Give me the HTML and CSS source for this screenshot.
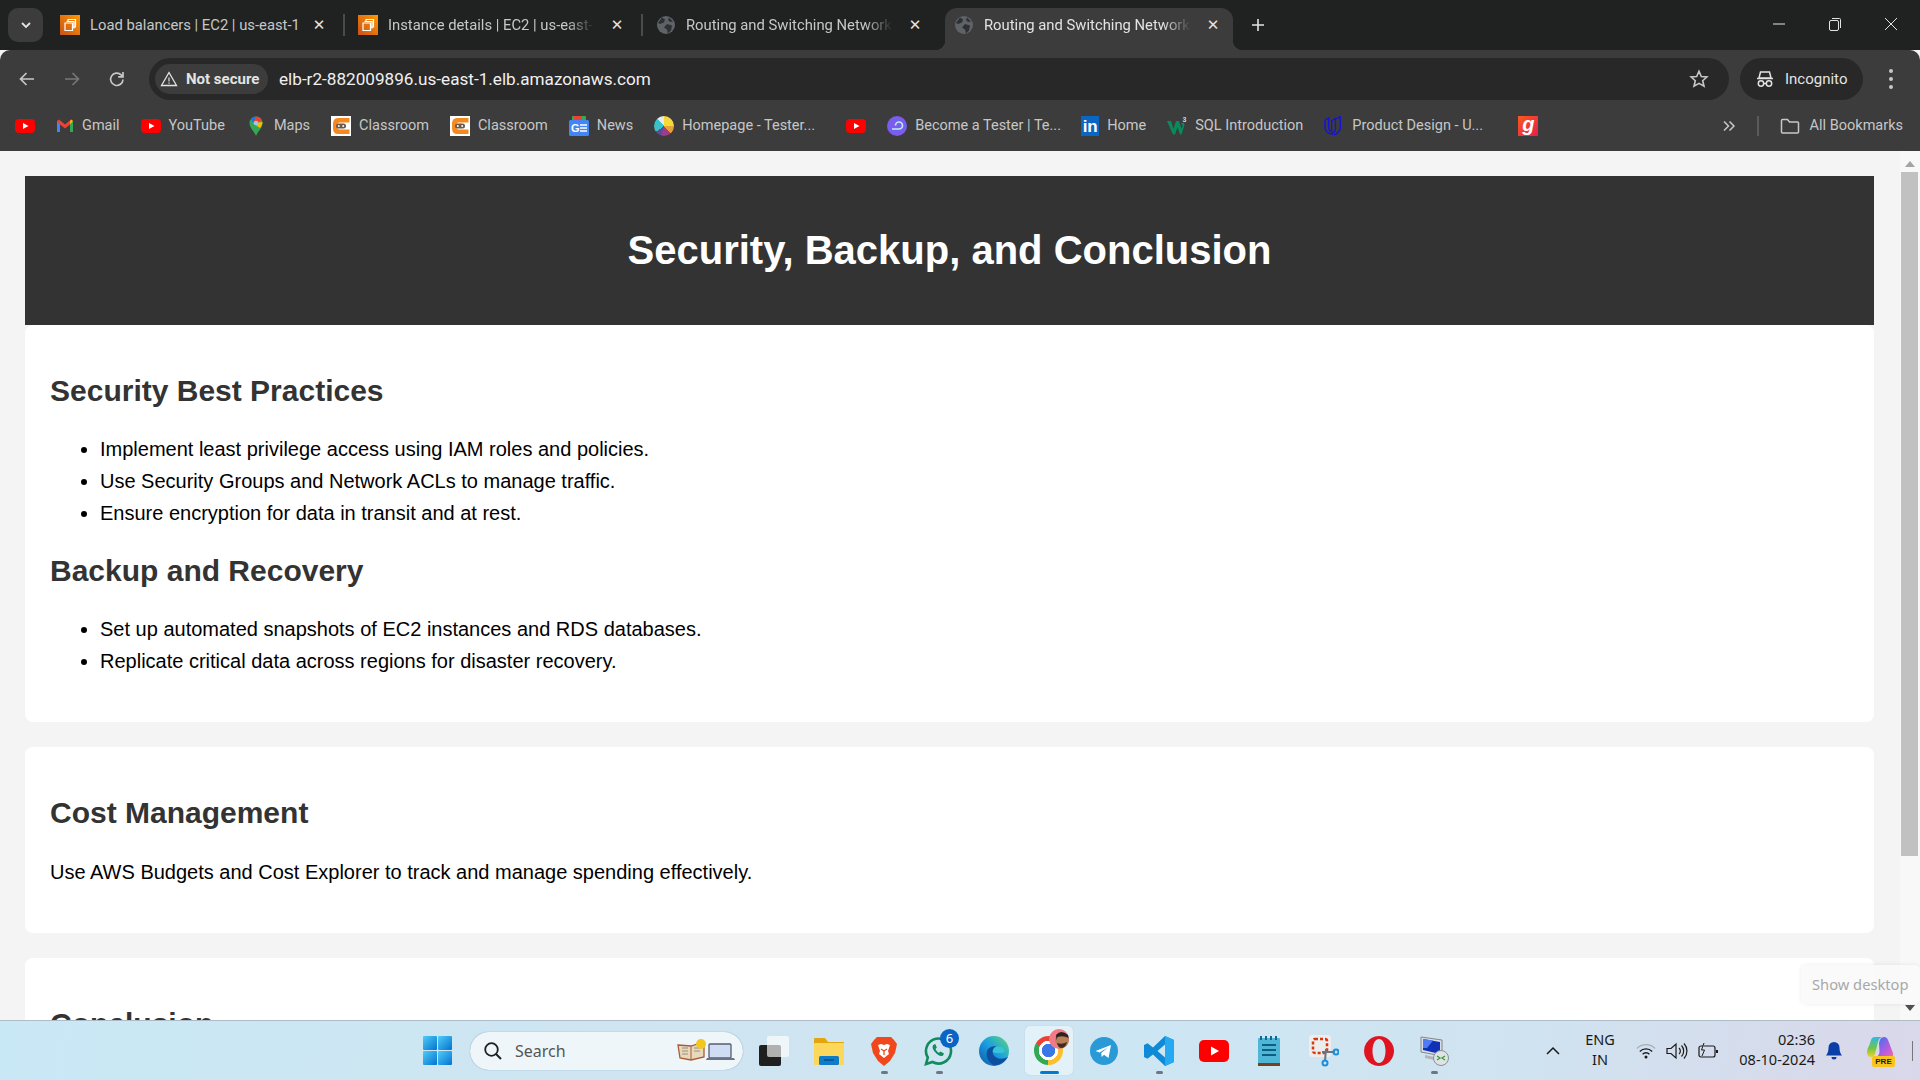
FILE: index.html
```html
<!DOCTYPE html>
<html lang="en">
<head>
  <meta charset="UTF-8" />
  <title>Routing and Switching Network</title>
  <link rel="stylesheet" href="styles.css">
</head>
<body>
  <svg class="defs" width="0" height="0">
    <defs>
      <linearGradient id="awsGrad" x1="0" y1="1" x2="1" y2="0"><stop offset="0" stop-color="#c8511b"/><stop offset="1" stop-color="#ff9900"/></linearGradient>
      <linearGradient id="winGrad" x1="0" y1="0" x2="1" y2="1"><stop offset="0" stop-color="#4fcdf8"/><stop offset="1" stop-color="#0472d0"/></linearGradient>
      <linearGradient id="edgeGrad" x1="0" y1="1" x2="1" y2="0"><stop offset="0" stop-color="#0c59a4"/><stop offset=".5" stop-color="#1b9de2"/><stop offset="1" stop-color="#5edb78"/></linearGradient>
      <linearGradient id="copLeft" x1="0" y1="0" x2="0" y2="1"><stop offset="0" stop-color="#2fb7ee"/><stop offset=".55" stop-color="#6cc644"/><stop offset="1" stop-color="#f2d02e"/></linearGradient>
      <linearGradient id="copRight" x1="0" y1="0" x2="1" y2="1"><stop offset="0" stop-color="#2a78e8"/><stop offset=".6" stop-color="#b45be0"/><stop offset="1" stop-color="#f06aa8"/></linearGradient>
      <symbol id="aws" viewBox="0 0 20 20">
        <rect width="20" height="20" fill="url(#awsGrad)"/>
        <path d="M8 7V4.500h7.500V12H13M5 8h7.500v7.500H5zM6.500 6.500h7.500v7" fill="none" stroke="#fff" stroke-width="1.200"/>
      </symbol>
      <symbol id="globe" viewBox="0 0 20 20">
        <circle cx="10" cy="10" r="9" fill="#5f6368"/>
        <path d="M6 2.500l3 2-1 3-4 1.500-2-1zM11 9l5 1.500-1 5-3 3-1-4-3-2zM13 2.500l4 4-3 .5-2-2z" fill="#2e3033"/>
      </symbol>
      <symbol id="yt" viewBox="0 0 20 20">
        <rect x="0" y="3" width="20" height="14" rx="4" fill="#f00"/>
        <path d="M8 7l5.500 3L8 13z" fill="#fff"/>
      </symbol>
      <symbol id="ninja" viewBox="0 0 20 20">
        <rect width="20" height="20" fill="#fff"/>
        <path d="M18.500 2H7Q2 2 2 8v4q0 6 5 6h11.500v-4.500H8.500q-2 0-2-2v-3q0-2 2-2h10z" fill="#f48a1f"/>
        <rect x="5" y="7.500" width="10" height="5" rx="2.500" fill="#6b5a4a"/>
        <circle cx="7.800" cy="10" r="1" fill="#fff"/><circle cx="12.200" cy="10" r="1" fill="#fff"/>
      </symbol>
    </defs>
  </svg>

  <div class="tabstrip">
    <button class="tab-search"><svg width="14" height="14" viewBox="0 0 14 14"><path d="M3 5l4 4 4-4" fill="none" stroke="#e3e3e3" stroke-width="1.800"/></svg></button>
    <div class="tab">
      <svg class="favicon"><use href="#aws"/></svg>
      <span class="tab-title">Load balancers | EC2 | us-east-1</span>
      <span class="tab-close">✕</span>
    </div>
    <span class="tab-sep"></span>
    <div class="tab">
      <svg class="favicon"><use href="#aws"/></svg>
      <span class="tab-title fade">Instance details | EC2 | us-east-1</span>
      <span class="tab-close">✕</span>
    </div>
    <span class="tab-sep"></span>
    <div class="tab">
      <svg class="favicon"><use href="#globe"/></svg>
      <span class="tab-title fade">Routing and Switching Network</span>
      <span class="tab-close">✕</span>
    </div>
    <span class="tab-sep hidden"></span>
    <div class="tab active">
      <svg class="favicon"><use href="#globe"/></svg>
      <span class="tab-title fade">Routing and Switching Network</span>
      <span class="tab-close">✕</span>
    </div>
    <svg class="new-tab" width="16" height="16" viewBox="0 0 16 16"><path d="M8 2v12M2 8h12" stroke="#e3e3e3" stroke-width="1.600"/></svg>
    <div class="win-controls">
      <svg width="14" height="14" viewBox="0 0 14 14"><path d="M1 7h12" stroke="#e3e3e3"/></svg>
      <svg width="14" height="16" viewBox="0 0 14 16"><rect x="1.500" y="4.500" width="9" height="10" rx="1.500" fill="none" stroke="#e3e3e3"/><path d="M4 2.500h7.500q1 0 1 1V12" fill="none" stroke="#e3e3e3"/></svg>
      <svg width="14" height="14" viewBox="0 0 14 14"><path d="M1 1l12 12M13 1L1 13" stroke="#e3e3e3"/></svg>
    </div>
  </div>

  <div class="toolbar">
    <svg class="nav-btn" width="20" height="20" viewBox="0 0 20 20"><path d="M17 10H4M9.500 4L3.500 10l6 6" fill="none" stroke="#c7c7c7" stroke-width="1.700"/></svg>
    <svg class="nav-btn" width="20" height="20" viewBox="0 0 20 20"><path d="M3 10h13M10.500 4l6 6-6 6" fill="none" stroke="#777" stroke-width="1.700"/></svg>
    <svg class="nav-btn" width="20" height="20" viewBox="0 0 20 20"><path d="M16 10.500a6.200 6.200 0 1 1-1.800-4.600L16 7.500M16 3v4.800h-4.800" fill="none" stroke="#c7c7c7" stroke-width="1.700"/></svg>
    <div class="omnibox">
      <div class="chip">
        <svg width="18" height="18" viewBox="0 0 18 18"><path d="M9 2.500L16.500 15.500h-15z" fill="none" stroke="#e3e3e3" stroke-width="1.300"/><path d="M9 7.500v4M9 12.500v1.300" stroke="#e3e3e3" stroke-width="1.200"/></svg>
        <span>Not secure</span>
      </div>
      <span class="url">elb-r2-882009896.us-east-1.elb.amazonaws.com</span>
      <svg class="star" width="20" height="20" viewBox="0 0 20 20"><path d="M10 2.300l2.300 5.200 5.600.5-4.200 3.700 1.300 5.500L10 14.300l-5 2.900 1.300-5.500L2.100 8l5.600-.5z" fill="none" stroke="#c7c7c7" stroke-width="1.600"/></svg>
    </div>
    <div class="incognito">
      <svg width="20" height="20" viewBox="0 0 20 20"><path d="M5.500 3h9l1.500 6H4zM2 9.500h16" fill="none" stroke="#e3e3e3" stroke-width="1.500"/><circle cx="6" cy="14.500" r="2.700" fill="none" stroke="#e3e3e3" stroke-width="1.500"/><circle cx="14" cy="14.500" r="2.700" fill="none" stroke="#e3e3e3" stroke-width="1.500"/><path d="M8.700 14.500h2.600" stroke="#e3e3e3" stroke-width="1.500"/></svg>
      <span>Incognito</span>
    </div>
    <svg class="menu-dots" width="6" height="22" viewBox="0 0 6 22"><circle cx="3" cy="3" r="2" fill="#c7c7c7"/><circle cx="3" cy="11" r="2" fill="#c7c7c7"/><circle cx="3" cy="19" r="2" fill="#c7c7c7"/></svg>
  </div>

  <div class="bookmarks">
    <div class="bm"><svg class="bm-icon"><use href="#yt"/></svg></div>
    <div class="bm"><svg class="bm-icon narrow" viewBox="0 0 18 20"><path d="M1 5v11h3V8.500l5 4 5-4V16h3V5l-2-1.500L9 8.500 3 3.500z" fill="#ea4335"/><path d="M1 5v11h3V8.500z" fill="#4285f4"/><path d="M17 5v11h-3V8.500z" fill="#34a853"/><path d="M15 3.500L17 5l-3 3.500V6z" fill="#fbbc04"/></svg><span>Gmail</span></div>
    <div class="bm"><svg class="bm-icon"><use href="#yt"/></svg><span>YouTube</span></div>
    <div class="bm"><svg class="bm-icon" viewBox="0 0 14 20"><path d="M7 20C5 15 .5 12 .5 7a6.500 6.500 0 0 1 13 0c0 5-4.500 8-6.500 13z" fill="#34a853"/><path d="M2 2.500A6.500 6.500 0 0 1 7 .5L4 7z" fill="#1a73e8"/><path d="M7 .5a6.500 6.500 0 0 1 6 4L4 7z" fill="#ea4335"/><path d="M13.500 6c0 2-1 4-2.500 6L4 7z" fill="#fbbc04"/><circle cx="7" cy="7" r="2.300" fill="#a3c2f0"/></svg><span>Maps</span></div>
    <div class="bm"><svg class="bm-icon"><use href="#ninja"/></svg><span>Classroom</span></div>
    <div class="bm"><svg class="bm-icon"><use href="#ninja"/></svg><span>Classroom</span></div>
    <div class="bm"><svg class="bm-icon" viewBox="0 0 20 20"><rect x="3" y="0" width="14" height="6" rx="1" fill="#34a853"/><rect x="5" y="0" width="8" height="4" fill="#ea4335"/><rect x="0" y="4" width="20" height="16" rx="1.500" fill="#4285f4"/><text x="2" y="16" class="news-g">G</text><path d="M11 9h7M11 12h7M11 15h7" stroke="#fff" stroke-width="1.500"/></svg><span>News</span></div>
    <div class="bm long first-long"><span class="pie"></span><span>Homepage - Tester...</span></div>
    <div class="bm"><svg class="bm-icon"><use href="#yt"/></svg></div>
    <div class="bm long"><svg class="bm-icon" viewBox="0 0 20 20"><circle cx="10" cy="10" r="10" fill="#7a5cf0"/><path d="M5 13h7a3.500 3.500 0 1 0-3.500-3.500" fill="none" stroke="#b9f0e4" stroke-width="1.700"/></svg><span>Become a Tester | Te...</span></div>
    <div class="bm"><span class="linkedin">in</span><span>Home</span></div>
    <div class="bm"><svg class="bm-icon" viewBox="0 0 20 20"><path d="M0 5h4l2.500 8L9 5h3l2.500 8 1-3.500L14 7h3l.5 2-3 9.500h-1.500L10.500 11l-2.500 7.500H6z" fill="#0a8a5c"/><text x="15.500" y="6" class="w3-sup">3</text></svg><span>SQL Introduction</span></div>
    <div class="bm long"><svg class="bm-icon" viewBox="0 0 21 20"><path d="M1 4l4-2.500v10c0 2.500 1.500 4 3 4.500V4.500L12 2v11c0 2-1 4-3.500 5.500C4 17.500 1 15 1 11zM13 2.500l4-2.500.2 11c0 4-3 7-7 8.500" fill="none" stroke="#1010e8" stroke-width="1.300"/></svg><span>Product Design - U...</span></div>
    <div class="bm"><span class="g-logo">g</span></div>
    <div class="bm-end">
      <svg width="14" height="14" viewBox="0 0 14 14"><path d="M2 2.500L6.500 7 2 11.500M7.500 2.500L12 7l-4.500 4.500" fill="none" stroke="#c7c7c7" stroke-width="1.500"/></svg>
      <span class="bm-sep"></span>
      <svg width="20" height="18" viewBox="0 0 20 18"><path d="M1.500 15V3.500q0-1 1-1h5l2 2.500h8q1 0 1 1V15q0 1-1 1h-15q-1 0-1-1z" fill="none" stroke="#c7c7c7" stroke-width="1.500"/></svg>
      <span class="all-bm">All Bookmarks</span>
    </div>
  </div>

  <div class="viewport">
    <div class="page">
      <header class="page-head">
        <h1>Security, Backup, and Conclusion</h1>
      </header>
      <section class="card">
        <h2>Security Best Practices</h2>
        <ul>
          <li>Implement least privilege access using IAM roles and policies.</li>
          <li>Use Security Groups and Network ACLs to manage traffic.</li>
          <li>Ensure encryption for data in transit and at rest.</li>
        </ul>
        <h2>Backup and Recovery</h2>
        <ul>
          <li>Set up automated snapshots of EC2 instances and RDS databases.</li>
          <li>Replicate critical data across regions for disaster recovery.</li>
        </ul>
      </section>
      <section class="card">
        <h2>Cost Management</h2>
        <p>Use AWS Budgets and Cost Explorer to track and manage spending effectively.</p>
      </section>
      <section class="card">
        <h2>Conclusion</h2>
      </section>
    </div>
    <div class="scrollbar">
      <span class="arrow up"></span>
      <span class="thumb"></span>
      <span class="arrow down"></span>
    </div>
    <div class="peek">Show desktop</div>
  </div>

  <footer class="taskbar">
    <div class="slot">
      <svg width="29" height="29" viewBox="0 0 29 29"><rect width="14" height="14" rx="1" fill="url(#winGrad)"/><rect x="15" width="14" height="14" rx="1" fill="url(#winGrad)"/><rect y="15" width="14" height="14" rx="1" fill="url(#winGrad)"/><rect x="15" y="15" width="14" height="14" rx="1" fill="url(#winGrad)"/></svg>
    </div>
    <div class="search">
      <svg width="20" height="20" viewBox="0 0 20 20"><circle cx="8.500" cy="8.500" r="6.300" fill="none" stroke="#1f1f1f" stroke-width="1.800"/><path d="M13 13l5 5" stroke="#1f1f1f" stroke-width="2"/></svg>
      <span>Search</span>
      <svg class="search-art" width="58" height="24" viewBox="0 0 58 24"><path d="M1 6l13 1 13-4v15l-13 3-11-2z" fill="#e8d9bd" stroke="#a85c3a" stroke-width="1.300"/><path d="M14 7v14" stroke="#a85c3a"/><path d="M5 9h6M5 12h6M5 15h6M17 9h6M17 12h6" stroke="#9b8f7a"/><circle cx="24" cy="5" r="5" fill="#f2c81e"/><rect x="32" y="5" width="22" height="14" rx="1" fill="#cfdcf3" stroke="#555d6e" stroke-width="1.300"/><path d="M30 19h27l1 2H29z" fill="#6a7285"/></svg>
    </div>
    <div class="slot first">
      <svg width="30" height="30" viewBox="0 0 30 30"><rect x="0" y="9" width="22" height="21" rx="2" fill="#1f1f1f"/><rect x="8" y="0" width="22" height="21" rx="2" fill="#fff" fill-opacity=".65"/></svg>
    </div>
    <div class="slot">
      <svg width="30" height="28" viewBox="0 0 30 28"><path d="M0 2q0-1 1-1h10l3 4h15q1 0 1 1v6H0z" fill="#e3a60f"/><rect y="6" width="30" height="22" rx="1" fill="#fbd75b"/><rect x="5" y="19" width="20" height="9" rx="1.500" fill="#0f7cc9"/><path d="M10 23h10" stroke="#0a4f8a" stroke-width="1.500"/></svg>
    </div>
    <div class="slot running">
      <svg width="26" height="30" viewBox="0 0 26 30"><path d="M6 1h14l3 3 3 4-2 9-5 8-6 5-6-5-5-8-2-9 3-4z" fill="#f1471d"/><path d="M7 9l3-1 3 1 3-1 3 1-2 6 1 3-5 4-5-4 1-3z" fill="#fff"/><path d="M10 13l3 2 3-2M13 15v4" stroke="#f1471d" stroke-width="1.300" fill="none"/></svg>
    </div>
    <div class="slot running">
      <svg width="31" height="30" viewBox="0 0 31 30"><path d="M3 28l1.800-6.500A12.500 12.500 0 1 1 9.500 26z" fill="none" stroke="#128c5e" stroke-width="2.600"/><path d="M11 8.500c-2 1-2 4 1 7.500s6 5 8 3.500l1-2-3.500-2-1.500 1.300c-1.500-.5-3-2.500-3.500-3.800l1.300-1.500-1.500-3.500z" fill="#128c5e"/></svg>
      <span class="count">6</span>
    </div>
    <div class="slot">
      <svg width="30" height="30" viewBox="0 0 30 30"><circle cx="15" cy="15" r="15" fill="url(#edgeGrad)"/><path d="M9 13c-3 5-1 12 5 16 5 1 11-2 15-8-6 3-13 2-15-3-1-3 0-6 3-8-3 0-6 1-8 3z" fill="#0d4f9e"/><path d="M14 14c1-4 8-5 11-1 1 2 0 4-3 4h-5c-2 0-4-1-3-3z" fill="#38c4d8"/></svg>
    </div>
    <div class="slot active">
      <span class="chrome"></span>
      <svg class="avatar" width="20" height="20" viewBox="0 0 20 20"><circle cx="10" cy="10" r="10" fill="#f27a86"/><path d="M6 12c0-5 2-8 7-8 5 0 7 3 7 6a10 10 0 0 1-6 9.200L10 19z" fill="#b98058"/><path d="M7 6q5-6 12 0l.5 3q-5-3-11-1l-1 3z" fill="#2a2320"/><path d="M8 14q5 2 10-1-1 5-5 6-4 0-5-5z" fill="#3d2c22"/></svg>
    </div>
    <div class="slot">
      <svg width="28" height="28" viewBox="0 0 28 28"><circle cx="14" cy="14" r="14" fill="#2a9ad6"/><path d="M5.500 14L21 8l-2.500 13-4.500-3.300-2.300 2.300-.5-4L18 10.500 9.500 15.500z" fill="#fff"/></svg>
    </div>
    <div class="slot running">
      <svg width="30" height="30" viewBox="0 0 30 30"><path d="M21 0l9 4v22l-9 4-12-11.500-5.500 4.200L0 21V9l3.500-1.700L9 11.500zM21 8.500L13.500 15 21 21.500z" fill="#0e8ad6"/><path d="M21 0l9 4v22l-9 4z" fill="#25a9f0"/></svg>
    </div>
    <div class="slot">
      <svg width="30" height="22" viewBox="0 0 30 22"><rect width="30" height="22" rx="5" fill="#f00"/><path d="M12 6.500l8 4.500-8 4.500z" fill="#fff"/></svg>
    </div>
    <div class="slot">
      <svg width="22" height="32" viewBox="0 0 22 32"><rect y="3" width="22" height="26" rx="1" fill="#4fb6d8"/><rect y="28" width="22" height="3" fill="#7a3f1d"/><path d="M3 1v4M8 1v4M13 1v4M18 1v4" stroke="#0b6a8e" stroke-width="2"/><path d="M4 10h14M4 15h14M4 20h14" stroke="#0b5f80" stroke-width="2"/></svg>
    </div>
    <div class="slot">
      <svg width="30" height="32" viewBox="0 0 30 32"><rect width="22" height="22" rx="3" fill="#ededed"/><rect x="4" y="4" width="14" height="14" rx="2" fill="none" stroke="#d9380f" stroke-width="2.500" stroke-dasharray="3 2"/><path d="M17 14l-1 12M13 17l13 0" stroke="#6d7680" stroke-width="2"/><circle cx="16" cy="28" r="2.500" fill="none" stroke="#1b8fd8" stroke-width="2"/><circle cx="27" cy="17" r="2.500" fill="none" stroke="#1b8fd8" stroke-width="2"/></svg>
    </div>
    <div class="slot">
      <svg width="30" height="30" viewBox="0 0 30 30"><path fill-rule="evenodd" d="M15 0a15 15 0 1 0 .01 0zM15 3c-4 0-6.500 5.500-6.500 12S11 27 15 27s6.500-5.500 6.500-12S19 3 15 3z" fill="#e0141f"/></svg>
    </div>
    <div class="slot running">
      <svg width="30" height="32" viewBox="0 0 30 32"><path d="M2 2l21 3v16L2 17z" fill="#d8dde6" stroke="#80868f"/><path d="M4 4l17 3v12L4 15z" fill="#1030b8"/><path d="M4 4l10 1.500L8 13l-4 0z" fill="#4f7cf0"/><path d="M6 20l14 3v3l-14-3z" fill="#b0b4bb"/><circle cx="22" cy="23" r="7.500" fill="#e0e3e5" stroke="#8a8f94"/><path d="M18 21l3 2-3 2M26 21l-3 2 3 2" fill="none" stroke="#3a9a3a" stroke-width="1.300"/></svg>
    </div>

    <div class="tray">
      <svg class="caret" width="14" height="10" viewBox="0 0 14 10"><path d="M1 8l6-6 6 6" fill="none" stroke="#1a1a1a" stroke-width="1.500"/></svg>
      <div class="lang"><span>ENG</span><span>IN</span></div>
      <svg class="tray-icon" width="20" height="18" viewBox="0 0 20 18"><path d="M1 6.500a12.500 12.500 0 0 1 18 0" fill="none" stroke="#a5adb5" stroke-width="1.200"/><path d="M3.800 9.500a8.500 8.500 0 0 1 12.400 0M6.600 12.300a4.500 4.500 0 0 1 6.800 0" fill="none" stroke="#1a1a1a" stroke-width="1.300"/><circle cx="10" cy="15" r="1.500" fill="#1a1a1a"/></svg>
      <svg class="tray-icon" width="22" height="18" viewBox="0 0 22 18"><path d="M1 6.500h4L10 2v14l-5-4.500H1z" fill="none" stroke="#1a1a1a" stroke-width="1.200"/><path d="M13 6a4 4 0 0 1 0 6M15.500 3.500a8 8 0 0 1 0 11M18 1.500a11 11 0 0 1 0 15" fill="none" stroke="#1a1a1a" stroke-width="1.200"/></svg>
      <svg class="tray-icon" width="21" height="18" viewBox="0 0 21 18"><rect x="1" y="4" width="16" height="11" rx="2" fill="none" stroke="#1a1a1a" stroke-width="1.200"/><path d="M18 8h2v3h-2z" fill="#1a1a1a"/><path d="M6 1L3.500 8h3L4 14" fill="#d6e2f0" stroke="#1a1a1a"/></svg>
      <div class="clock"><span>02:36</span><span>08-10-2024</span></div>
      <svg class="bell" width="16" height="18" viewBox="0 0 16 18"><path d="M8 0a5.500 5.500 0 0 0-5.500 5.500c0 4-1 6-2.500 8h16c-1.500-2-2.500-4-2.500-8A5.500 5.500 0 0 0 8 0zM5.500 15h5a2.500 2.500 0 0 1-5 0z" fill="#0b3fa8"/></svg>
      <div class="copilot">
        <svg width="28" height="26" viewBox="0 0 28 26"><path d="M9 1h7q-3 1-4 5L9 18q-1 3-4 3-4 0-4-5 0-3 2-6l2-6q1-3 4-3z" fill="url(#copLeft)"/><path d="M13 7q1-6 5-6 3 0 4 3l5 13q1 4-3 4H10q3-1 3.500-5z" fill="url(#copRight)"/></svg>
        <span class="pre">PRE</span>
      </div>
      <span class="tray-sep"></span>
    </div>
  </footer>
</body>
</html>
```

FILE: styles.css
```css
* {
  box-sizing: border-box;
}
body {
  margin: 0;
  width: 1920px;
  height: 1080px;
  overflow: hidden;
  display: flex;
  flex-direction: column;
  font-family: "Liberation Sans", Arial, sans-serif;
  background: #f4f4f4;
}
.defs {
  position: absolute;
}

/* browser chrome */
.tabstrip {
  height: 50px;
  flex: none;
  display: flex;
  align-items: flex-start;
  background: #202221;
  font-family: Roboto, sans-serif;
  padding-left: 8px;
}
.tab-search {
  width: 35px;
  height: 34px;
  margin: 8px 8px 0 0;
  padding: 0;
  border: none;
  border-radius: 10px;
  background: #3c3c3c;
  display: flex;
  align-items: center;
  justify-content: center;
}
.tab {
  width: 288px;
  height: 42px;
  margin-top: 8px;
  padding: 0 11px 8px 9px;
  display: flex;
  align-items: center;
  border-radius: 12px 12px 0 0;
  position: relative;
  color: #c7c7c7;
  font-size: 14.8px;
}
.tab.active {
  background: #3c3c3c;
  color: #e3e3e3;
}
.tab.active::before,
.tab.active::after {
  content: "";
  position: absolute;
  bottom: 0;
  width: 10px;
  height: 10px;
  background: radial-gradient(circle at 0 0, #202221 10px, #3c3c3c 10.5px);
}
.tab.active::before {
  left: -10px;
}
.tab.active::after {
  right: -10px;
  background: radial-gradient(circle at 100% 0, #202221 10px, #3c3c3c 10.5px);
}
.favicon {
  width: 20px;
  height: 20px;
  flex: none;
}
.tab-title {
  width: 213px;
  margin-left: 10px;
  flex: none;
  white-space: nowrap;
  overflow: hidden;
}
.tab-title.fade {
  -webkit-mask-image: linear-gradient(to right, #000 84%, transparent 97%);
  mask-image: linear-gradient(to right, #000 84%, transparent 97%);
}
.tab-close {
  margin-left: 8px;
  width: 16px;
  text-align: center;
  font-size: 15px;
  font-family: "DejaVu Sans", sans-serif;
  color: #e3e3e3;
}
.tab-sep {
  width: 2px;
  height: 22px;
  margin: 14px 4px 0;
  background: #4a4c4b;
}
.tab-sep.hidden {
  background: none;
}
.new-tab {
  margin: 17px 0 0 17px;
}
.win-controls {
  margin-left: auto;
  height: 48px;
  padding-right: 22px;
  display: flex;
  align-items: center;
  justify-content: flex-end;
  gap: 42px;
}
.toolbar {
  height: 50px;
  flex: none;
  padding: 8px 19px 0 17px;
  display: flex;
  background: #3c3c3c;
  border-radius: 10px 10px 0 0;
  font-family: Roboto, sans-serif;
}
.nav-btn {
  margin: 11px 25px 0 0;
  flex: none;
}
.omnibox {
  width: 1580px;
  margin-left: -3px;
  padding: 0 20px 0 6px;
  display: flex;
  align-items: center;
  background: #282828;
  border-radius: 21px;
}
.chip {
  width: 113px;
  height: 30px;
  padding-left: 5px;
  display: flex;
  align-items: center;
  gap: 8px;
  border-radius: 15px;
  background: #3c3c3c;
  color: #e3e3e3;
  font-size: 15px;
  font-weight: 700;
  white-space: nowrap;
}
.url {
  margin-left: 11px;
  color: #f0f0f0;
  font-size: 17.15px;
}
.star {
  margin-left: auto;
}
.incognito {
  width: 123px;
  margin-left: 11px;
  padding-left: 15px;
  display: flex;
  align-items: center;
  gap: 10px;
  background: #282828;
  border-radius: 21px;
  color: #e3e3e3;
  font-size: 15px;
}
.menu-dots {
  margin: 10px 0 0 25px;
}
.bookmarks {
  height: 51px;
  flex: none;
  padding: 0 17px 0 15px;
  display: flex;
  align-items: center;
  gap: 21px;
  background: #3c3c3c;
  color: #c7c7c7;
  font-family: Roboto, sans-serif;
  font-size: 14.5px;
}
.bm {
  display: flex;
  align-items: center;
  gap: 8px;
  white-space: nowrap;
}
.bm.long {
  width: 173px;
}
.bm.first-long {
  width: 171px;
}
.bm-icon {
  width: 20px;
  height: 20px;
  flex: none;
}
.bm-icon.narrow {
  width: 18px;
}
.news-g {
  font: 700 11px "Liberation Sans", sans-serif;
  fill: #fff;
}
.w3-sup {
  font: 700 7px "Liberation Sans", sans-serif;
  fill: #d8d8d8;
}
.pie {
  width: 20px;
  height: 20px;
  flex: none;
  border-radius: 50%;
  background: conic-gradient(#f5d83a 0 25%, #e8a13a 25% 38%, #a03a8a 38% 55%, #5a4a9a 55% 65%, #3ac0c8 65% 88%, #e8e8e8 88% 100%);
}
.linkedin {
  width: 18px;
  height: 20px;
  background: #0a66c2;
  color: #fff;
  font: 700 17px/22px "Liberation Sans", sans-serif;
  text-align: center;
}
.g-logo {
  width: 20px;
  height: 20px;
  background: linear-gradient(135deg, #f9591d, #e81c4f);
  color: #fff;
  font: italic 700 20px/17px "Liberation Sans", sans-serif;
  text-align: center;
}
.bm-end {
  margin-left: auto;
  display: flex;
  align-items: center;
}
.bm-sep {
  width: 2px;
  height: 20px;
  margin: 0 21px 0 21px;
  background: #5a5a5a;
}
.all-bm {
  margin-left: 10px;
}

/* page */
.viewport {
  flex: 1;
  min-height: 0;
  display: flex;
  position: relative;
  overflow: hidden;
}
.page {
  width: 1900px;
  padding: 25px 26px 0 25px;
  color: #000;
  font-size: 20px;
  line-height: 32px;
}
.page-head {
  height: 149px;
  padding-bottom: 2px;
  display: flex;
  align-items: center;
  justify-content: center;
  background: #333;
  color: #fff;
}
.page-head h1 {
  margin: 0;
  font-size: 40px;
  line-height: 46px;
}
.card {
  margin-bottom: 25px;
  padding: 25px;
  background: #fff;
  border-radius: 8px;
}
.card h2 {
  margin: 17px 0 18px;
  color: #333;
  font-size: 30px;
  line-height: 48px;
}
.card ul {
  margin: 18px 0;
  padding-left: 50px;
}
.card ul:last-child {
  margin-bottom: 20px;
}
.card p {
  margin: 19px 0 20px;
}
.scrollbar {
  width: 20px;
  padding: 10px 2px 0 1px;
  display: flex;
  flex-direction: column;
  align-items: center;
  background: #f8f8f8;
}
.arrow {
  width: 0;
  height: 0;
  border-left: 5px solid transparent;
  border-right: 5px solid transparent;
}
.arrow.up {
  border-bottom: 6px solid #a3a3a3;
}
.arrow.down {
  margin-top: auto;
  margin-bottom: 9px;
  border-top: 6px solid #505050;
}
.thumb {
  width: 100%;
  height: 684px;
  margin-top: 5px;
  background: #c1c1c1;
}
.peek {
  position: absolute;
  right: 0;
  bottom: 16px;
  width: 119px;
  height: 39px;
  padding-left: 11px;
  background: rgba(249, 249, 249, .9);
  border-radius: 5px;
  box-shadow: 0 0 4px rgba(0, 0, 0, .08);
  color: #a8a8a8;
  font: 14.7px/39px "Noto Sans", sans-serif;
}

/* windows taskbar */
.taskbar {
  height: 60px;
  flex: none;
  padding-left: 410px;
  display: flex;
  align-items: center;
  border-top: 1px solid #aebcc8;
  background: linear-gradient(100deg, #c9e8f5 0%, #cfe5f1 35%, #cde6f3 60%, #d0e3f0 80%, #dad7ea 100%);
  font-family: "Noto Sans", sans-serif;
  color: #1a1a1a;
}
.slot {
  width: 55px;
  height: 59px;
  flex: none;
  display: flex;
  align-items: center;
  justify-content: center;
  position: relative;
}
.slot.first {
  margin-left: 3px;
}
.slot.running::after,
.slot.active::after {
  content: "";
  position: absolute;
  bottom: 6px;
  left: 50%;
  width: 7px;
  height: 3px;
  margin-left: -3px;
  border-radius: 2px;
  background: #6d7780;
}
.slot.active::before {
  content: "";
  position: absolute;
  top: 5px;
  left: 4px;
  width: 48px;
  height: 49px;
  border-radius: 5px;
  background: rgba(255, 255, 255, .45);
  box-shadow: 0 0 1px rgba(0, 0, 0, .2);
}
.slot.active::after {
  width: 19px;
  margin-left: -9px;
  background: #0078d4;
}
.search {
  width: 273px;
  height: 38px;
  margin-left: 5px;
  padding: 0 8px 0 13px;
  flex: none;
  display: flex;
  align-items: center;
  border-radius: 19px;
  background: #eff6fa;
  box-shadow: 0 0 1px rgba(60, 90, 120, .7);
  color: #555;
  font-size: 16px;
}
.search span {
  margin-left: 12px;
}
.search-art {
  margin-left: auto;
}
.chrome {
  width: 29px;
  height: 29px;
  position: relative;
  border-radius: 50%;
  background: radial-gradient(circle, #3b78e7 0 6.5px, #fff 7px 9.5px, transparent 10px), conic-gradient(from 60deg, #fbc02d 0 120deg, #34a853 120deg 240deg, #ea4335 240deg 360deg);
}
.avatar {
  position: absolute;
  top: 8px;
  right: 7px;
}
.count {
  position: absolute;
  top: 8px;
  right: 7px;
  width: 19px;
  height: 19px;
  border-radius: 50%;
  background: #0a64c8;
  color: #fff;
  font-size: 13px;
  line-height: 19px;
  text-align: center;
}
.tray {
  margin-left: auto;
  display: flex;
  align-items: center;
  font-size: 14.5px;
}
.caret {
  margin-right: 20px;
}
.lang,
.clock {
  margin-bottom: 3px;
  display: flex;
  flex-direction: column;
  line-height: 20px;
}
.lang {
  width: 40px;
  align-items: center;
}
.clock {
  width: 82px;
  margin-left: 14px;
  align-items: flex-end;
}
.tray-icon {
  margin-left: 10px;
}
.lang + .tray-icon {
  margin-left: 16px;
}
.bell {
  margin-left: 11px;
}
.copilot {
  margin-left: 24px;
  position: relative;
  width: 28px;
  height: 30px;
}
.pre {
  position: absolute;
  left: 6px;
  bottom: -1px;
  width: 23px;
  height: 11px;
  border-radius: 2px;
  background: #f8c51c;
  color: #1a1a1a;
  font: 700 8px/11px "Liberation Sans", sans-serif;
  text-align: center;
}
.tray-sep {
  width: 1px;
  height: 20px;
  margin: 0 7px 0 18px;
  background: #777;
}
```
